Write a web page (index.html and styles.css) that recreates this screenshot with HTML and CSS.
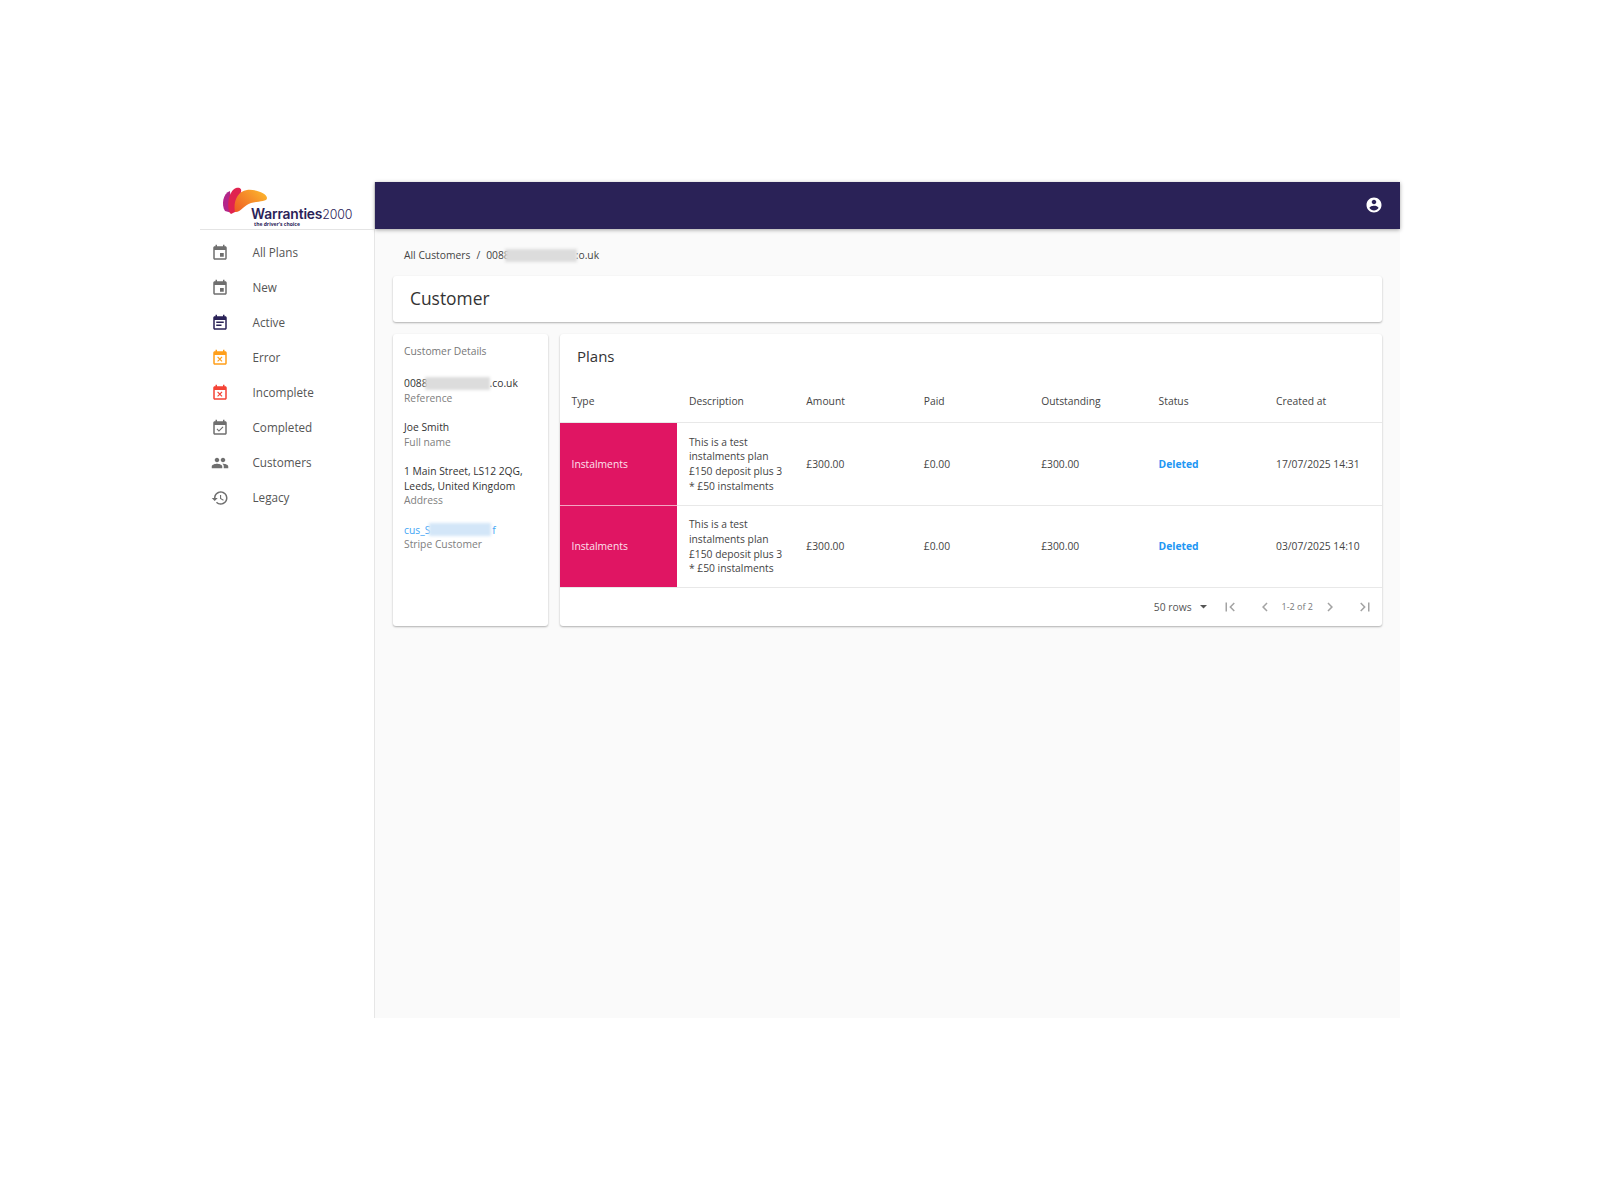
FILE: index.html
```html
<!DOCTYPE html>
<html lang="en">
<head>
<meta charset="utf-8">
<title>Customer</title>
<link rel="stylesheet" href="styles.css">
</head>
<body>
<div class="app">
  <aside class="sidebar">
    <div class="logo">
      <svg class="logo-mark" viewBox="0 0 50 32" aria-hidden="true">
        <defs>
          <linearGradient id="swoosh" x1="0" y1="1" x2="1" y2="0.3">
            <stop offset="0" stop-color="#ee5a24"/>
            <stop offset="1" stop-color="#fbb02d"/>
          </linearGradient>
        </defs>
        <path fill="#b3268a" d="M5 26C1 20 3 8 10 6l2 22z"/>
        <path fill="#e0234f" d="M11 29C6 24 8 6 16 3c4-1 6 1 5 4l-6 20z"/>
        <path fill="url(#swoosh)" d="M15 27C13 18 17 6 27 5c8-1 20 3 20 8 0 4-9 3-16 5-7 2-11 10-16 9z"/>
      </svg>
      <div class="logo-word"><b>Warranties</b>2000</div>
      <div class="logo-tag">the driver's choice</div>
    </div>
    <nav class="nav">
      <a class="nav-item"><svg class="ico grey" viewBox="0 0 24 24"><path d="M17 12h-5v5h5v-5zM16 1v2H8V1H6v2H5c-1.11 0-1.99.9-1.99 2L3 19c0 1.1.89 2 2 2h14c1.1 0 2-.9 2-2V5c0-1.1-.9-2-2-2h-1V1h-2zm3 18H5V8h14v11z"/></svg><span>All Plans</span></a>
      <a class="nav-item"><svg class="ico grey" viewBox="0 0 24 24"><path d="M17 12h-5v5h5v-5zM16 1v2H8V1H6v2H5c-1.11 0-1.99.9-1.99 2L3 19c0 1.1.89 2 2 2h14c1.1 0 2-.9 2-2V5c0-1.1-.9-2-2-2h-1V1h-2zm3 18H5V8h14v11z"/></svg><span>New</span></a>
      <a class="nav-item"><svg class="ico navy" viewBox="0 0 24 24"><path d="M17 10H7v2h10v-2zm2-7h-1V1h-2v2H8V1H6v2H5c-1.11 0-1.99.9-1.99 2L3 19c0 1.1.89 2 2 2h14c1.1 0 2-.9 2-2V5c0-1.1-.9-2-2-2zm0 16H5V8h14v11zm-5-5H7v2h7v-2z"/></svg><span>Active</span></a>
      <a class="nav-item"><svg class="ico orange" viewBox="0 0 24 24"><path d="M9.31 17l2.44-2.44L14.19 17l1.06-1.06-2.44-2.44 2.44-2.44L14.19 10l-2.44 2.44L9.31 10l-1.06 1.06 2.44 2.44-2.44 2.44L9.31 17zM19 3h-1V1h-2v2H8V1H6v2H5c-1.11 0-1.99.9-1.99 2L3 19c0 1.1.89 2 2 2h14c1.1 0 2-.9 2-2V5c0-1.1-.9-2-2-2zm0 16H5V8h14v11z"/></svg><span>Error</span></a>
      <a class="nav-item"><svg class="ico red" viewBox="0 0 24 24"><path d="M9.31 17l2.44-2.44L14.19 17l1.06-1.06-2.44-2.44 2.44-2.44L14.19 10l-2.44 2.44L9.31 10l-1.06 1.06 2.44 2.44-2.44 2.44L9.31 17zM19 3h-1V1h-2v2H8V1H6v2H5c-1.11 0-1.99.9-1.99 2L3 19c0 1.1.89 2 2 2h14c1.1 0 2-.9 2-2V5c0-1.1-.9-2-2-2zm0 16H5V8h14v11z"/></svg><span>Incomplete</span></a>
      <a class="nav-item"><svg class="ico grey" viewBox="0 0 24 24"><path d="M16.53 11.06L15.47 10l-4.88 4.88-2.12-2.12-1.06 1.06L10.59 17l5.94-5.94zM19 3h-1V1h-2v2H8V1H6v2H5c-1.11 0-1.99.9-1.99 2L3 19c0 1.1.89 2 2 2h14c1.1 0 2-.9 2-2V5c0-1.1-.9-2-2-2zm0 16H5V8h14v11z"/></svg><span>Completed</span></a>
      <a class="nav-item"><svg class="ico grey" viewBox="0 0 24 24"><path d="M16 11c1.66 0 2.99-1.34 2.99-3S17.66 5 16 5c-1.66 0-3 1.34-3 3s1.34 3 3 3zm-8 0c1.66 0 2.99-1.34 2.99-3S9.66 5 8 5C6.34 5 5 6.34 5 8s1.34 3 3 3zm0 2c-2.33 0-7 1.17-7 3.5V19h14v-2.5c0-2.33-4.67-3.5-7-3.5zm8 0c-.29 0-.62.02-.97.05 1.16.84 1.97 1.97 1.97 3.45V19h6v-2.5c0-2.33-4.67-3.5-7-3.5z"/></svg><span>Customers</span></a>
      <a class="nav-item"><svg class="ico grey" viewBox="0 0 24 24"><path d="M13 3c-4.97 0-9 4.03-9 9H1l3.89 3.89.07.14L9 12H6c0-3.87 3.13-7 7-7s7 3.13 7 7-3.13 7-7 7c-1.93 0-3.68-.79-4.94-2.06l-1.42 1.42C8.27 19.99 10.51 21 13 21c4.97 0 9-4.03 9-9s-4.03-9-9-9zm-1 5v5l4.28 2.54.72-1.21-3.5-2.08V8h-1.5z"/></svg><span>Legacy</span></a>
    </nav>
  </aside>
  <div class="content">
    <header class="topbar">
      <svg class="ico white" viewBox="0 0 24 24"><path d="M12 2C6.48 2 2 6.48 2 12s4.48 10 10 10 10-4.48 10-10S17.52 2 12 2zm0 3c1.66 0 3 1.34 3 3s-1.34 3-3 3-3-1.34-3-3 1.34-3 3-3zm0 14.2c-2.5 0-4.71-1.28-6-3.22.03-1.99 4-3.08 6-3.08 1.99 0 5.97 1.09 6 3.08-1.29 1.94-3.5 3.22-6 3.22z"/></svg>
    </header>
    <main class="main">
      <div class="crumbs"><span>All Customers</span><span class="sep">/</span><span class="masked">0088<i class="blur b-crumb"></i>:o.uk</span></div>
      <section class="card title-card"><h1>Customer</h1></section>
      <div class="columns">
        <section class="card details">
          <h2>Customer Details</h2>
          <div class="field"><div class="val masked">0088<i class="blur b-ref"></i>.co.uk</div><div class="lab">Reference</div></div>
          <div class="field"><div class="val">Joe Smith</div><div class="lab">Full name</div></div>
          <div class="field"><div class="val">1 Main Street, LS12 2QG, Leeds, United Kingdom</div><div class="lab">Address</div></div>
          <div class="field"><div class="val masked link">cus_S<i class="blur blue b-cus"></i>f</div><div class="lab">Stripe Customer</div></div>
        </section>
        <section class="card plans">
          <h2>Plans</h2>
          <table>
            <thead>
              <tr><th>Type</th><th>Description</th><th>Amount</th><th>Paid</th><th>Outstanding</th><th>Status</th><th>Created at</th></tr>
            </thead>
            <tbody>
              <tr><td class="type">Instalments</td><td>This is a test instalments plan £150 deposit plus 3 * £50 instalments</td><td>£300.00</td><td>£0.00</td><td>£300.00</td><td class="status">Deleted</td><td>17/07/2025 14:31</td></tr>
              <tr><td class="type">Instalments</td><td>This is a test instalments plan £150 deposit plus 3 * £50 instalments</td><td>£300.00</td><td>£0.00</td><td>£300.00</td><td class="status">Deleted</td><td>03/07/2025 14:10</td></tr>
            </tbody>
          </table>
          <div class="pager">
            <span class="rows">50 rows</span>
            <svg class="caret" viewBox="0 0 10 5"><path d="M0 0l5 5 5-5z"/></svg>
            <svg class="pg first" viewBox="0 0 24 24"><path d="M18.41 16.59L13.82 12l4.59-4.59L17 6l-6 6 6 6zM6 6h2v12H6z"/></svg>
            <svg class="pg prev" viewBox="0 0 24 24"><path d="M15.41 7.41L14 6l-6 6 6 6 1.41-1.41L10.83 12z"/></svg>
            <span class="count">1-2 of 2</span>
            <svg class="pg next" viewBox="0 0 24 24"><path d="M10 6L8.59 7.41 13.17 12l-4.58 4.59L10 18l6-6z"/></svg>
            <svg class="pg last" viewBox="0 0 24 24"><path d="M5.59 7.41L10.18 12l-4.59 4.59L7 18l6-6-6-6zM16 6h2v12h-2z"/></svg>
          </div>
        </section>
      </div>
    </main>
  </div>
</div>
</body>
</html>
```
FILE: styles.css
```css
* { box-sizing: border-box; }
html, body { margin: 0; height: 100%; }
body {
  min-height: 1200px;
  background: #fff;
  display: flex;
  align-items: center;
  justify-content: center;
  font-family: "Open Sans", "Liberation Sans", sans-serif;
  font-size: 10.3px;
  line-height: 14.67px;
  color: #444;
}
.app { width: 1200px; height: 836px; display: flex; }
.sidebar { width: 175px; flex: none; background: #fff; border-right: 1px solid #e6e6e6; }
.logo { height: 47.5px; border-bottom: 1px solid #e4e4e4; position: relative; }
.logo-mark { position: absolute; left: 20px; top: 2.5px; width: 50px; height: 32px; }
.logo-word { position: absolute; left: 51px; top: 23.5px; font-family: Inter, "Open Sans", sans-serif; font-size: 12.4px; line-height: 16px; letter-spacing: -.15px; color: #2b2358; font-weight: 300; white-space: nowrap; }
.logo-word b { font-size: 13.8px; font-weight: 600; }
.logo-tag { position: absolute; left: 54px; top: 38.5px; font-size: 5px; line-height: 6px; color: #2b2358; font-weight: 700; white-space: nowrap; }
.nav { padding-top: 5.5px; }
.nav-item { height: 35px; display: flex; align-items: center; padding-left: 11px; gap: 23.5px; font-size: 11.7px; color: #555; }
.ico { width: 18px; height: 18px; flex: none; fill: currentColor; }
.grey { color: #6f6f6f; }
.navy { color: #2a2257; }
.orange { color: #ff9f1a; }
.red { color: #f44336; }
.white { color: #fff; }
.content { flex: 1; min-width: 0; display: flex; flex-direction: column; background: #fafafa; }
.topbar { height: 46.5px; flex: none; background: #2a2257; display: flex; align-items: center; justify-content: flex-end; padding-right: 17.5px; box-shadow: 0 1px 4px rgba(0,0,0,.35); }
.main { flex: 1; padding: 17.5px 18px 0; }
.crumbs { display: flex; align-items: center; height: 19px; padding-left: 11px; gap: 6px; color: #444; margin-bottom: 10.5px; }
.masked { display: inline-flex; align-items: center; }
.val.masked { display: flex; }
.blur { display: inline-block; background: #dcdcdc; filter: blur(1.5px); height: 13px; }
.blur.blue { background: #d3e6f8; }
.b-crumb { width: 72px; margin-left: -5px; margin-right: -1px; }
.b-ref { width: 65px; margin-left: -3px; }
.b-cus { width: 62px; margin-left: -1px; margin-right: 1px; }
.card { background: #fff; border-radius: 3px; box-shadow: 0 1px 2px rgba(0,0,0,.3); }
.title-card { height: 46px; display: flex; align-items: center; padding-left: 17px; }
h1 { margin: 0; font-size: 17.4px; font-weight: 400; color: #333; }
.columns { display: flex; gap: 12px; margin-top: 12px; align-items: stretch; height: 292.5px; }
.details { width: 155px; flex: none; padding: 10px 11px; color: #333; }
.details h2 { margin: 0 0 18px; font-size: 10.3px; font-weight: 400; color: #777; line-height: 14.67px; }
.field { margin-bottom: 14.6px; }
.lab { color: #808080; }
.link { color: #42a5f5; }
.plans { flex: 1; min-width: 0; display: flex; flex-direction: column; }
.plans h2 { margin: 0; padding: 12.5px 17px 0; height: 48px; flex: none; font-size: 15px; font-weight: 400; line-height: 20px; color: #333; }
table { width: 100%; table-layout: fixed; border-collapse: collapse; flex: none; }
th { height: 41px; padding: 0 11.5px; text-align: left; font-weight: 400; color: #444; border-bottom: 1px solid #e8e8e8; }
td { height: 82px; padding: 11.5px; border-bottom: 1px solid #e8e8e8; color: #444; }
td.type { background: #e01563; color: #fde3ee; border-bottom-color: #f3a6c2; }
tr:last-child td.type { border-bottom-color: #e8e8e8; }
td.status { color: #2196f3; font-weight: 700; }
.pager { flex: 1; display: flex; align-items: center; justify-content: flex-end; padding-right: 8px; color: #555; }
.rows { font-size: 10.3px; margin-left: -1px; }
.caret { width: 7px; height: 3.5px; fill: #555; margin-left: 8px; margin-right: 14px; }
.pg { width: 18px; height: 18px; fill: #a3a3a3; }
.prev { margin-left: 17px; }
.count { font-size: 9px; color: #777; margin: 0 8px; }
.last { margin-left: 17px; }
```
